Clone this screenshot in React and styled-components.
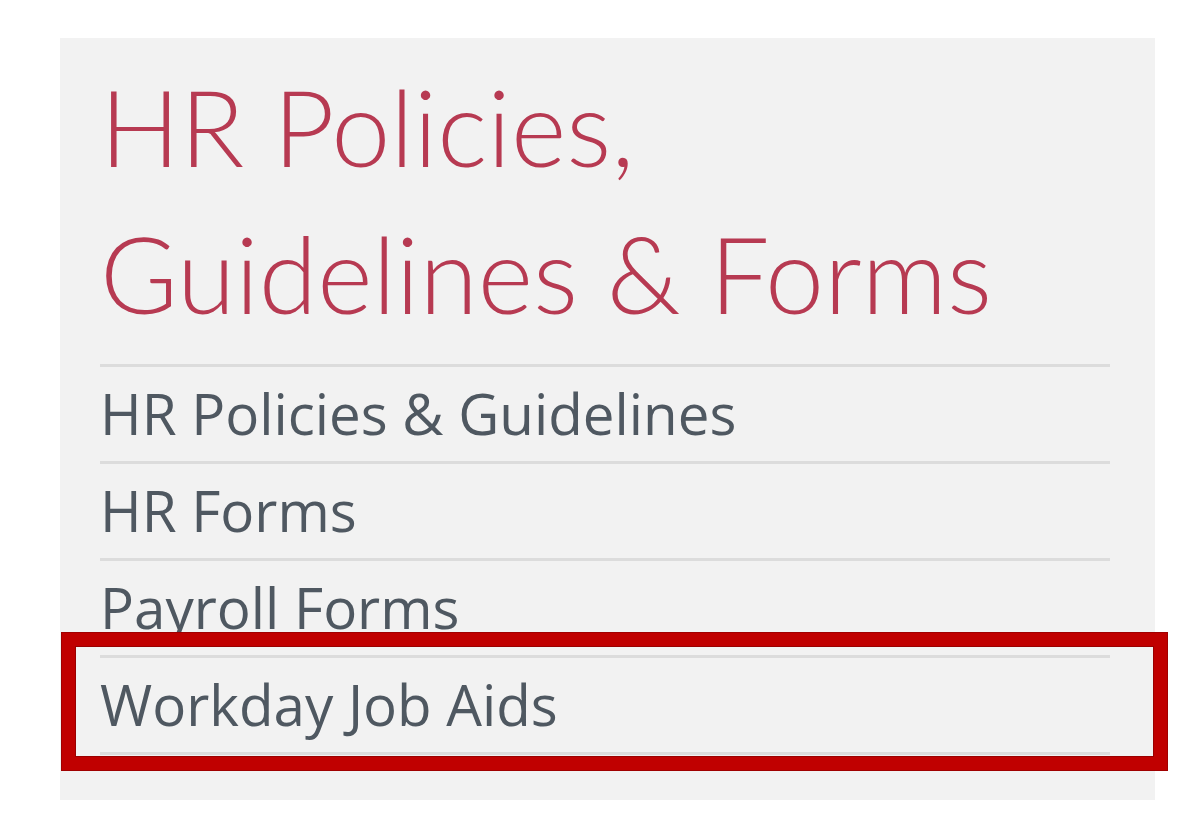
import React from 'react';
import styled, { createGlobalStyle } from 'styled-components';

const GlobalStyle = createGlobalStyle`
    html, body {
        margin: 0;
        padding: 0;
        background: #ffffff;
    }
    body {
        font-family: "Open Sans", "Noto Sans", sans-serif;
    }
`

const Page = styled.div`
    display: flex;
    width: 1200px;
    height: 826px;
    padding: 38px 0 0 60px;
    box-sizing: border-box;
`

const Panel = styled.div`
    display: flex;
    flex-direction: column;
    width: 1095px;
    height: 762px;
    padding: 15px 45px 0 40px;
    box-sizing: border-box;
    background: #f2f2f2;
`

const Title = styled.h1`
    margin: 0 0 17px 0;
    font-family: Lato, "Open Sans", sans-serif;
    font-size: 106px;
    line-height: 147px;
    font-weight: 300;
    color: #b73a52;
    white-space: nowrap;
`

const List = styled.ul`
    display: flex;
    flex-direction: column;
    margin: 0;
    padding: 0;
    list-style: none;
`

const Item = styled.li`
    position: relative;
    height: 94px;
    border-top: solid 3px #dcdcdc;
    border-bottom: ${props => props.last ? 'solid 3px #dcdcdc' : 'none'};
    font-size: 56.5px;
    line-height: 94px;
    color: #4f5861;
    white-space: nowrap;

    &::after {
        content: '';
        display: ${props => props.highlight ? 'block' : 'none'};
        position: absolute;
        top: -25px;
        left: -38px;
        right: -57px;
        bottom: -18px;
        border: solid 13px #c00000;
        box-shadow: inset 0 0 0 1px #9a0000, 0 0 0 1px #a00000;
    }
`

const links = ['HR Policies & Guidelines', 'HR Forms', 'Payroll Forms', 'Workday Job Aids']

const App = () => {
    return (
        <>
            <GlobalStyle />
            <Page>
                <Panel>
                    <Title>HR Policies,<br />Guidelines &amp; Forms</Title>
                    <List>
                        {links.map((label, i) => (
                            <Item key={label} last={i === links.length - 1} highlight={label === 'Workday Job Aids'}>{label}</Item>
                        ))}
                    </List>
                </Panel>
            </Page>
        </>
    );
}

export default App;
